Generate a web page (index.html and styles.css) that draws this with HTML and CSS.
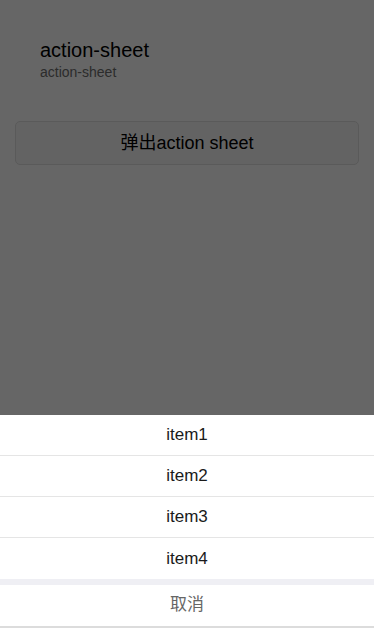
FILE: index.html
```html
<!DOCTYPE html>
<html>
<head>
<meta charset="utf-8">
<link rel="stylesheet" href="styles.css">
</head>
<body>
<div class="page">
  <div class="header">
    <div class="title">action-sheet</div>
    <div class="subtitle">action-sheet</div>
  </div>
  <div class="btn-wrap">
    <div class="btn">弹出action sheet</div>
  </div>
</div>
<div class="mask"></div>
<div class="sheet">
  <div class="menu">
    <div class="item">item1</div>
    <div class="item">item2</div>
    <div class="item">item3</div>
    <div class="item">item4</div>
  </div>
  <div class="cancel">取消</div>
</div>
</body>
</html>
```

FILE: styles.css
```css
html, body {
  margin: 0;
  padding: 0;
  height: 100%;
  background: #fff;
  font-family: "Liberation Sans", Arial, "Noto Sans CJK SC", sans-serif;
  overflow: hidden;
}
.page {
  padding: 38px 15px 0 15px;
}
.header {
  padding-left: 25px;
}
.title {
  font-size: 20px;
  line-height: 24px;
  color: #000;
}
.subtitle {
  font-size: 14px;
  line-height: 18px;
  padding-top: 1px;
  color: #6e6e6e;
}
.btn-wrap {
  margin-top: 40px;
}
.btn {
  height: 42px;
  border: 1px solid #e0e0e0;
  border-radius: 5px;
  background: #f8f8f8;
  font-size: 18px;
  line-height: 42px;
  text-align: center;
  color: #000;
}
.mask {
  position: fixed;
  inset: 0;
  background: rgba(0, 0, 0, 0.6);
}
.sheet {
  position: fixed;
  left: 0;
  right: 0;
  bottom: 0;
  background: #efeff4;
  border-bottom: 2px solid #dcdcdc;
}
.menu {
  background: #fff;
}
.item {
  height: 40px;
  line-height: 40px;
  text-align: center;
  font-size: 17px;
  color: #1a1a1a;
  border-top: 1px solid #e5e5e5;
}
.item:first-child {
  border-top: none;
}
.item:last-child {
  height: 41px;
  line-height: 41px;
}
.cancel {
  margin-top: 6px;
  height: 41px;
  line-height: 40px;
  text-align: center;
  background: #fff;
  font-size: 17px;
  color: #666;
}
```
